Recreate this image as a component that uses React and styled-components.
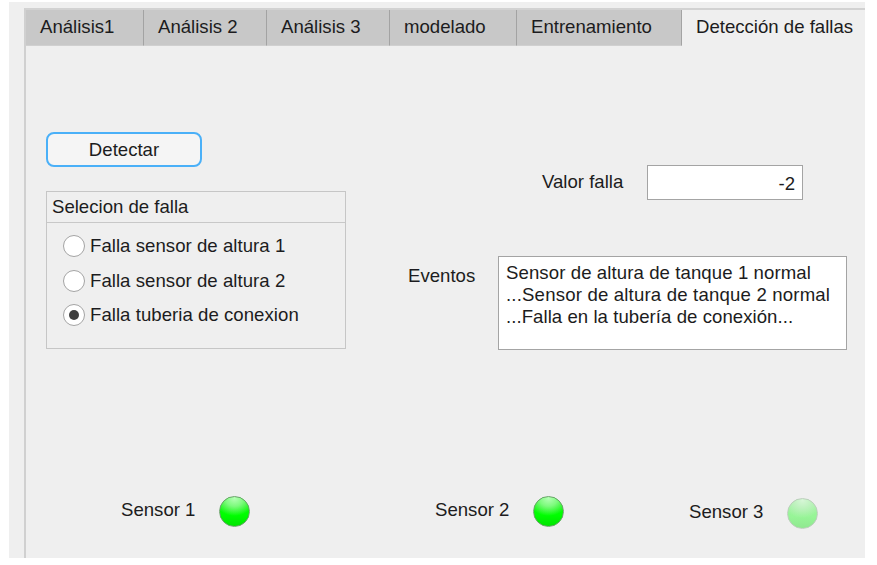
import React from "react";
import styled, { createGlobalStyle } from "styled-components";

const GlobalStyle = createGlobalStyle`
  * { box-sizing: border-box; }
  body { margin: 0; background: #fff; }
`;

const Page = styled.div`
  width: 877px;
  height: 565px;
  padding: 2px 12px 7px 9px;
  background: #fff;
  overflow: hidden;
`;

const Window = styled.div`
  width: 856px;
  height: 556px;
  padding: 6px 0 0 15px;
  background: #efefef;
  color: #1c1c20;
  font-family: "Liberation Sans", Arial, sans-serif;
  font-size: 18.6px;
  line-height: 22px;
  white-space: nowrap;
`;

const Panel = styled.div`
  height: 550px;
  border-left: 2px solid #d0d0d0;
  border-top: 2px solid #d2d2d2;
`;

const TabBar = styled.div`
  display: flex;
  height: 36px;
`;

const Tab = styled.div`
  width: ${(p) => p.$width}px;
  flex: none;
  height: 36px;
  padding: 6px 0 0 14px;
  background: ${(p) => (p.$active ? "#efefef" : "#c8c8c8")};
  border-right: ${(p) => (p.$active ? "0" : "1px solid #a3a3a3")};
  border-bottom: ${(p) => (p.$active ? "0" : "1px solid #d0d0d0")};
`;

const Content = styled.div`
  display: grid;
  grid-template-columns: 300px 1fr;
  column-gap: 62px;
  height: 304px;
  padding: 86px 0 0 20px;
`;

const DetectButton = styled.button`
  display: block;
  width: 156px;
  height: 35px;
  padding: 0;
  border: 2px solid #4ab0f8;
  border-radius: 8px;
  background: #f5f5f5;
  color: inherit;
  font: inherit;
`;

const Group = styled.div`
  width: 300px;
  height: 158px;
  margin-top: 24px;
  border: 1px solid #c6c6c6;
`;

const GroupTitle = styled.div`
  height: 31px;
  padding: 4px 0 0 5px;
  border-bottom: 1px solid #c8c8c8;
`;

const Options = styled.div`
  display: grid;
  grid-auto-rows: 34.5px;
  padding: 6px 0 0 16px;
`;

const Option = styled.div`
  display: flex;
  align-items: center;
  gap: 5px;
  letter-spacing: 0.04px;
`;

const Radio = styled.span`
  display: grid;
  place-items: center;
  width: 22px;
  height: 22px;
  border: 1px solid #a4a4a4;
  border-radius: 50%;
  background: #fff;

  &::after {
    content: "";
    width: 10px;
    height: 10px;
    border-radius: 50%;
    background: ${(p) => (p.$checked ? "#3f3f3f" : "transparent")};
  }
`;

const ValueRow = styled.div`
  display: flex;
  gap: 26px;
  margin-top: 33px;
  padding-left: 134px;
`;

const FieldLabel = styled.span`
  flex: none;
  width: ${(p) => p.$width}px;
  padding-top: ${(p) => p.$top}px;
`;

const ValueField = styled.div`
  width: 156px;
  height: 35px;
  padding: 7px 7px 0 0;
  border: 1px solid #a4a4a4;
  background: #fff;
  text-align: right;
`;

const EventsRow = styled.div`
  display: flex;
  gap: 21px;
  margin-top: 56px;
`;

const EventsField = styled.div`
  width: 349px;
  height: 94px;
  padding: 5px 0 0 7px;
  border: 1px solid #a4a4a4;
  background: #fff;
`;

const EventLine = styled.div`
  letter-spacing: ${(p) => p.$tracking}px;
`;

const Sensors = styled.div`
  display: flex;
  padding: 146px 0 0 95px;
`;

const Sensor = styled.div`
  display: flex;
  align-items: flex-start;
  gap: 23px;
  width: ${(p) => p.$width}px;
  padding-top: ${(p) => p.$top}px;
`;

const SensorLabel = styled.span`
  width: 75px;
  padding-top: 3px;
`;

const Lamp = styled.span`
  width: 31px;
  height: 31px;
  border: 1px solid ${(p) => (p.$dim ? "#bccfbc" : "#6aa56a")};
  border-radius: 50%;
  background: ${(p) =>
    p.$dim
      ? "radial-gradient(ellipse 70% 60% at 50% 5%, #d6f6d6 0%, #bdf2bd 45%, rgba(151,243,151,0) 100%), linear-gradient(#9df09d 0%, #97f597 60%, #90e890 100%)"
      : "radial-gradient(ellipse 70% 60% at 50% 5%, #b5ffb5 0%, #7dfb7d 45%, rgba(0,255,0,0) 100%), linear-gradient(#18e818 0%, #00ff00 60%, #00e400 100%)"};
`;

const tabs = [
  { name: "Análisis1", width: 118 },
  { name: "Análisis 2", width: 123 },
  { name: "Análisis 3", width: 123 },
  { name: "modelado", width: 127 },
  { name: "Entrenamiento", width: 165 },
  { name: "Detección de fallas", width: 183, active: true },
];

const faults = [
  { name: "Falla sensor de altura 1" },
  { name: "Falla sensor de altura 2" },
  { name: "Falla tuberia de conexion", checked: true },
];

const events = [
  { text: "Sensor de altura de tanque 1 normal", tracking: 0.09 },
  { text: "...Sensor de altura de tanque 2 normal", tracking: 0.18 },
  { text: "...Falla en la tubería de conexión...", tracking: 0.05 },
];

const sensors = [
  { name: "Sensor 1", width: 314, top: 0 },
  { name: "Sensor 2", width: 254, top: 0 },
  { name: "Sensor 3", width: 140, top: 2, dim: true },
];

export default function App() {
  return (
    <Page>
      <GlobalStyle />
      <Window>
        <Panel>
          <TabBar>
            {tabs.map((t) => (
              <Tab key={t.name} $width={t.width} $active={t.active}>
                {t.name}
              </Tab>
            ))}
          </TabBar>
          <Content>
            <div>
              <DetectButton>Detectar</DetectButton>
              <Group>
                <GroupTitle>Selecion de falla</GroupTitle>
                <Options>
                  {faults.map((f) => (
                    <Option key={f.name}>
                      <Radio $checked={f.checked} />
                      {f.name}
                    </Option>
                  ))}
                </Options>
              </Group>
            </div>
            <div>
              <ValueRow>
                <FieldLabel $width={79} $top={6}>Valor falla</FieldLabel>
                <ValueField>-2</ValueField>
              </ValueRow>
              <EventsRow>
                <FieldLabel $width={69} $top={9}>Eventos</FieldLabel>
                <EventsField>
                  {events.map((e) => (
                    <EventLine key={e.text} $tracking={e.tracking}>
                      {e.text}
                    </EventLine>
                  ))}
                </EventsField>
              </EventsRow>
            </div>
          </Content>
          <Sensors>
            {sensors.map((s) => (
              <Sensor key={s.name} $width={s.width} $top={s.top}>
                <SensorLabel>{s.name}</SensorLabel>
                <Lamp $dim={s.dim} />
              </Sensor>
            ))}
          </Sensors>
        </Panel>
      </Window>
    </Page>
  );
}
